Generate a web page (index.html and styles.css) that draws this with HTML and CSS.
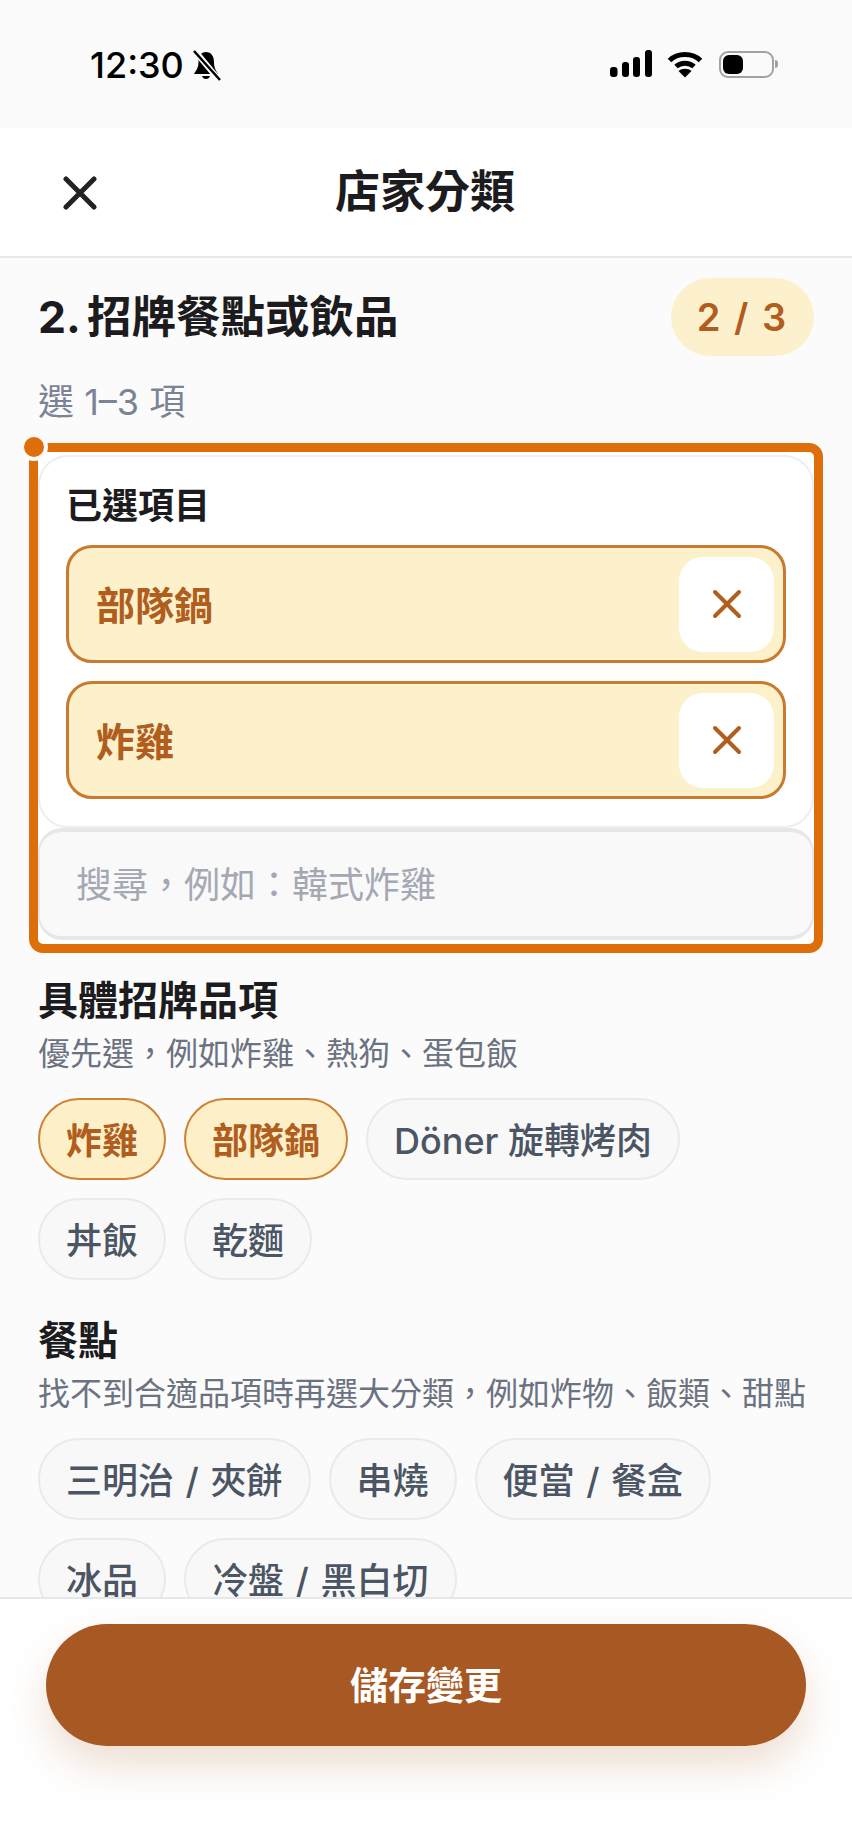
FILE: index.html
```html
<!DOCTYPE html>
<html lang="zh-Hant">
<head>
  <meta charset="UTF-8">
  <meta name="viewport" content="width=device-width, initial-scale=1.0">
  <title>店家分類</title>
  <link rel="stylesheet" href="styles.css">
</head>
<body>
  <div class="screen">
    <div class="status-bar">
      <div class="status-left">
        <span class="time">12:30</span>
        <svg class="bell" width="29" height="31" viewBox="0 0 29 31">
          <path d="M14 2C9 2 6.500 6 6.500 12C6.500 18 4 20.500 2 24H26C24 20.500 22 18 22 12C22 6 19 2 14 2Z" fill="#000"/>
          <path d="M10 26a4.200 4.200 0 0 0 8 0Z" fill="#000"/>
          <path d="M3 1L27 30" stroke="#fafafb" stroke-width="6"/>
          <path d="M2 1L28 30" stroke="#000" stroke-width="2.500"/>
        </svg>
      </div>
      <div class="status-right">
        <svg class="signal" width="43" height="28" viewBox="0 0 43 28">
          <rect x="0" y="17" width="7.500" height="10" rx="3" fill="#000"/>
          <rect x="12" y="12" width="7" height="15" rx="3" fill="#000"/>
          <rect x="23" y="7" width="7" height="20" rx="3" fill="#000"/>
          <rect x="35" y="0" width="7" height="27" rx="3" fill="#000"/>
        </svg>
        <svg class="wifi" width="36" height="28" viewBox="0 0 36 28">
          <path d="M2.500 10.500C10.500 2.500 25.500 2.500 33.500 10.500" fill="none" stroke="#000" stroke-width="5"/>
          <path d="M9 16.500C14 12 22 12 27 16.500" fill="none" stroke="#000" stroke-width="5"/>
          <path d="M18 27.500L11.500 21C15 18 21 18 24.500 21Z" fill="#000"/>
        </svg>
        <div class="battery"><div class="battery-fill"></div></div>
        <div class="battery-nub"></div>
      </div>
    </div>

    <header class="top-bar">
      <svg class="close-icon" width="34" height="34" viewBox="0 0 34 34">
        <path d="M3 3L31 31M31 3L3 31" stroke="#222" stroke-width="5" stroke-linecap="round"/>
      </svg>
      <h1>店家分類</h1>
    </header>

    <main class="content">
      <div class="title-row">
        <h2>2. 招牌餐點或飲品</h2>
        <span class="badge">2 / 3</span>
      </div>
      <p class="hint">選 1–3 項</p>

      <div class="focus-frame">
        <span class="focus-dot"></span>
        <div class="selected-card">
          <div class="selected-title">已選項目</div>
          <div class="selected-item">
            <span>部隊鍋</span>
            <button class="remove-btn">
              <svg width="30" height="30" viewBox="0 0 30 30"><path d="M3 3L27 27M27 3L3 27" stroke="#b05d1e" stroke-width="4" stroke-linecap="round"/></svg>
            </button>
          </div>
          <div class="selected-item">
            <span>炸雞</span>
            <button class="remove-btn">
              <svg width="30" height="30" viewBox="0 0 30 30"><path d="M3 3L27 27M27 3L3 27" stroke="#b05d1e" stroke-width="4" stroke-linecap="round"/></svg>
            </button>
          </div>
        </div>
        <div class="search-box">搜尋，例如：韓式炸雞</div>
      </div>

      <h3 class="group-title">具體招牌品項</h3>
      <p class="group-sub">優先選，例如炸雞、熱狗、蛋包飯</p>
      <div class="chips">
        <span class="chip active">炸雞</span>
        <span class="chip active">部隊鍋</span>
        <span class="chip">Döner 旋轉烤肉</span>
        <span class="chip">丼飯</span>
        <span class="chip">乾麵</span>
      </div>

      <h3 class="group-title second">餐點</h3>
      <p class="group-sub">找不到合適品項時再選大分類，例如炸物、飯類、甜點</p>
      <div class="chips">
        <span class="chip wide-space">三明治 / 夾餅</span>
        <span class="chip">串燒</span>
        <span class="chip wide-space">便當 / 餐盒</span>
        <span class="chip">冰品</span>
        <span class="chip wide-space">冷盤 / 黑白切</span>
      </div>
    </main>

    <footer class="bottom-bar">
      <button class="save-btn">儲存變更</button>
    </footer>
  </div>
</body>
</html>
```

FILE: styles.css
```css
* {
  box-sizing: border-box;
}
body {
  margin: 0;
  font-family: 'Inter', 'Noto Sans CJK TC', sans-serif;
  background: #fff;
  color: #1c1c1e;
}
p, h1, h2, h3 {
  margin: 0;
}
button {
  font-family: inherit;
  border: none;
  padding: 0;
}
.screen {
  width: 852px;
  height: 1846px;
  display: flex;
  flex-direction: column;
  overflow: hidden;
}

/* status bar */
.status-bar {
  height: 128px;
  flex: none;
  background: #fafafb;
  display: flex;
  justify-content: space-between;
  align-items: flex-start;
  padding: 50px 74px 0 90px;
}
.status-left {
  display: flex;
  align-items: center;
  gap: 8px;
  height: 30px;
}
.time {
  font-size: 36px;
  font-weight: 500;
  line-height: 30px;
  color: #000;
}
.status-right {
  display: flex;
  align-items: flex-start;
}
.wifi {
  margin: 0 16px 0 14px;
}
.battery {
  width: 55px;
  height: 27px;
  margin-top: 1px;
  border: 2px solid #a2a2a2;
  border-radius: 9px;
  padding: 2px;
}
.battery-fill {
  width: 20px;
  height: 19px;
  background: #000;
  border-radius: 6px;
}
.battery-nub {
  width: 3px;
  height: 8px;
  margin: 10px 0 0 1px;
  background: #a2a2a2;
  border-radius: 0 3px 3px 0;
}

/* header */
.top-bar {
  height: 130px;
  flex: none;
  background: #fff;
  border-bottom: 2px solid #e6e7ea;
  padding-right: 2px;
  display: flex;
  align-items: center;
  justify-content: center;
  position: relative;
}
.close-icon {
  position: absolute;
  left: 63px;
  top: 48px;
}
.top-bar h1 {
  font-size: 45px;
  font-weight: 700;
  line-height: 60px;
  color: #1c1c1e;
}

/* scrolling area */
.content {
  flex: 1;
  min-height: 0;
  overflow: hidden;
  background: #fbfbfc;
  padding: 20px 38px 0;
}
.title-row {
  display: flex;
  justify-content: space-between;
  align-items: center;
}
.title-row h2 {
  font-size: 44.500px;
  font-weight: 700;
  line-height: 60px;
  word-spacing: -3px;
}
.badge {
  width: 143px;
  height: 78px;
  border-radius: 39px;
  background: #fdf1cd;
  color: #b05d1e;
  font-size: 38px;
  font-weight: 600;
  letter-spacing: 2px;
  display: flex;
  align-items: center;
  justify-content: center;
}
.hint {
  margin-top: 24px;
  font-size: 36px;
  line-height: 44px;
  color: #7b8494;
}

/* selected items + search */
.focus-frame {
  position: relative;
  margin: 19px -9px 0;
  border: 9px solid #dd6e0a;
  border-radius: 14px;
  padding: 3px 0 4px;
  background: #fff;
}
.focus-dot {
  position: absolute;
  left: -18px;
  top: -19px;
  width: 28px;
  height: 28px;
  border-radius: 50%;
  border: 4px solid #fbfbfc;
  background: #dd6e0a;
}
.selected-card {
  background: #fff;
  border: 2px solid #eceef0;
  border-radius: 30px;
  padding: 25px 26px 27px;
}
.selected-title {
  font-size: 36px;
  font-weight: 600;
  line-height: 48px;
  margin-bottom: 15px;
}
.selected-item {
  height: 118px;
  background: #fdf1cc;
  border: 3px solid #c87a2e;
  border-radius: 26px;
  margin-bottom: 18px;
  padding: 0 9px 0 27px;
  display: flex;
  align-items: center;
  justify-content: space-between;
  font-size: 39px;
  font-weight: 700;
  color: #b05d1e;
}
.selected-item span {
  padding-bottom: 3px;
}
.selected-item:last-child {
  margin-bottom: 0;
}
.remove-btn {
  width: 95px;
  height: 95px;
  background: #fff;
  border-radius: 24px;
  display: flex;
  align-items: center;
  justify-content: center;
}
.search-box {
  height: 112px;
  background: #f9f9fa;
  border: 2px solid #e5e7eb;
  border-top-width: 4px;
  border-bottom-width: 4px;
  border-radius: 24px;
  padding: 0 0 4px 36px;
  display: flex;
  align-items: center;
  font-size: 36px;
  color: #a4a8b3;
}

/* option groups */
.group-title {
  margin-top: 21px;
  font-size: 40px;
  font-weight: 700;
  line-height: 54px;
}
.group-title.second {
  margin-top: 34px;
}
.group-sub {
  font-size: 32px;
  line-height: 44px;
  color: #6b7280;
  margin-top: 4px;
}
.chips {
  margin-top: 22px;
  display: flex;
  flex-wrap: wrap;
  gap: 18px;
}
.chip {
  height: 82px;
  padding: 0 26px 2px;
  border: 2px solid #eaeaec;
  border-radius: 41px;
  background: #f8f8f9;
  display: flex;
  align-items: center;
  font-size: 36px;
  font-weight: 500;
  color: #4b5563;
}
.chip.wide-space {
  word-spacing: 2px;
}
.chip.active {
  background: #fdf0c9;
  border-color: #cf8234;
  color: #b05d1e;
  font-weight: 700;
}

/* footer */
.bottom-bar {
  height: 249px;
  flex: none;
  background: #fff;
  border-top: 2px solid #e6e7ea;
  padding: 25px 46px 0;
}
.save-btn {
  width: 100%;
  height: 122px;
  border-radius: 61px;
  background: #a85822;
  color: #fff;
  font-size: 38px;
  font-weight: 700;
  padding-bottom: 5px;
  box-shadow: 0 20px 40px rgba(168, 88, 34, 0.2);
}
```
